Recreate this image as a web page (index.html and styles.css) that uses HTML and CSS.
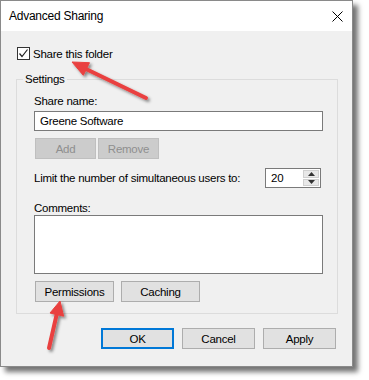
FILE: index.html
```html
<!DOCTYPE html>
<html lang="en">
<head>
    <meta charset="UTF-8">
    <title>Advanced Sharing</title>
    <link rel="stylesheet" href="styles.css">
</head>
<body>
    <div class="window">
        <div class="titlebar">
            <span class="title">Advanced Sharing</span>
            <svg class="close" width="11" height="11" viewBox="0 0 11 11">
                <path d="M0.5 0.5 L10.5 10.5 M10.5 0.5 L0.5 10.5" stroke="#000" stroke-width="1" fill="none"/>
            </svg>
        </div>

        <div class="content">
            <div class="check-row">
                <span class="checkbox">
                    <svg width="11" height="11" viewBox="0 0 11 11">
                        <path d="M1.5 5.5 L4 8.5 L9.5 1.5" stroke="#222" stroke-width="1.2" fill="none"/>
                    </svg>
                </span>
                <span>Share this folder</span>
            </div>

            <fieldset class="settings">
                <legend>Settings</legend>
                <div class="field-label">Share name:</div>
                <div class="textbox">Greene Software</div>
                <div class="btn-row">
                    <button class="btn btn-small" disabled>Add</button>
                    <button class="btn btn-small" disabled>Remove</button>
                </div>
                <div class="limit-row">
                    <span>Limit the number of simultaneous users to:</span>
                    <div class="spinner">
                        <span class="spin-value">20</span>
                        <span class="spin-btns">
                            <span class="spin-btn">
                                <svg width="7" height="4" viewBox="0 0 7 4"><path d="M0 4 L3.5 0 L7 4 Z" fill="#333"/></svg>
                            </span>
                            <span class="spin-btn">
                                <svg width="7" height="4" viewBox="0 0 7 4"><path d="M0 0 L3.5 4 L7 0 Z" fill="#333"/></svg>
                            </span>
                        </span>
                    </div>
                </div>
                <div class="field-label comments-label">Comments:</div>
                <div class="textarea"></div>
                <div class="btn-row btn-row-wide">
                    <button class="btn btn-wide">Permissions</button>
                    <button class="btn btn-wide">Caching</button>
                </div>
            </fieldset>

            <div class="dialog-buttons">
                <button class="btn btn-dialog btn-default">OK</button>
                <button class="btn btn-dialog">Cancel</button>
                <button class="btn btn-dialog">Apply</button>
            </div>
        </div>
    </div>

    <svg class="arrows" width="369" height="380" viewBox="0 0 369 380">
        <defs>
            <filter id="arrow-shadow" x="-20%" y="-20%" width="140%" height="140%">
                <feDropShadow dx="2" dy="2" stdDeviation="1.5" flood-color="#000" flood-opacity="0.45"/>
            </filter>
        </defs>
        <g filter="url(#arrow-shadow)" fill="#e9413f" stroke="#e9413f">
            <line x1="146" y1="98" x2="85" y2="68.5" stroke-width="4" stroke-linecap="round"/>
            <polygon points="72,62 89.5,62.7 83.3,75.3" stroke-width="1" stroke-linejoin="round"/>
            <line x1="49" y1="348" x2="57" y2="313" stroke-width="4" stroke-linecap="round"/>
            <polygon points="60,301 63.6,316.2 50,313" stroke-width="1" stroke-linejoin="round"/>
        </g>
    </svg>
</body>
</html>
```

FILE: styles.css
```css
body {
    margin: 0;
    width: 369px;
    height: 380px;
    overflow: hidden;
    position: relative;
    background-color: #ffffff;
    font-family: 'Liberation Sans', Arial, sans-serif;
    font-size: 11.5px;
    letter-spacing: -0.25px;
    color: #000000;
}

.window {
    width: 353px;
    height: 367px;
    box-sizing: border-box;
    border: 1px solid #8a8a8a;
    background-color: #f0f0f0;
    box-shadow: 5px 5px 5px rgba(0,0,0,0.55);
    display: flex;
    flex-direction: column;
}

.titlebar {
    height: 30px;
    background-color: #ffffff;
    display: flex;
    align-items: center;
    justify-content: space-between;
    padding: 0 9px 0 8px;
}

.title {
    font-size: 12px;
}

.close {
    display: block;
}

.content {
    flex: 1;
    padding: 16px 14px 0 15px;
}

.check-row {
    display: flex;
    align-items: center;
    gap: 3px;
    height: 13px;
    padding-left: 1px;
}

.checkbox {
    width: 13px;
    height: 13px;
    box-sizing: border-box;
    border: 1px solid #333333;
    background-color: #ffffff;
    display: flex;
    align-items: center;
    justify-content: center;
}

.checkbox svg {
    display: block;
}

.settings {
    margin: 12px 0 0 0;
    padding: 0 14px 11px 17px;
    border: 1px solid #dcdcdc;
    min-width: 0;
}

.settings legend {
    margin-left: -11px;
    padding: 0 2px;
    line-height: 14px;
}

.field-label {
    line-height: 14px;
    margin-top: 8px;
}

.textbox {
    margin-top: 3px;
    height: 20px;
    box-sizing: border-box;
    border: 1px solid #7a7a7a;
    background-color: #ffffff;
    padding-left: 5px;
    line-height: 18px;
}

.btn-row {
    display: flex;
    gap: 2px;
    margin-top: 7px;
    padding-left: 1px;
}

.btn-row-wide {
    gap: 7px;
}

.btn {
    height: 21px;
    box-sizing: border-box;
    background-color: #e1e1e1;
    border: 1px solid #adadad;
    font-family: inherit;
    font-size: 11.5px;
    letter-spacing: -0.25px;
    color: #000000;
    padding: 0;
    margin: 0;
}

.btn:disabled {
    background-color: #cccccc;
    border-color: #bfbfbf;
    color: #8f8f8f;
}

.btn-small {
    width: 61px;
}

.btn-wide {
    width: 79px;
}

.limit-row {
    display: flex;
    align-items: center;
    justify-content: space-between;
    margin-top: 9px;
    height: 20px;
}

.spinner {
    width: 56px;
    height: 20px;
    box-sizing: border-box;
    border: 1px solid #7a7a7a;
    background-color: #ffffff;
    margin-right: 2px;
    display: flex;
}

.spin-value {
    flex: 1;
    padding-left: 5px;
    line-height: 18px;
}

.spin-btns {
    width: 16px;
    display: flex;
    flex-direction: column;
    gap: 1px;
    padding: 1px 1px 1px 0;
}

.spin-btn {
    flex: 1;
    background-color: #e8e8e8;
    border: 1px solid #d0d0d0;
    display: flex;
    align-items: center;
    justify-content: center;
}

.spin-btn svg {
    display: block;
}

.comments-label {
    margin-top: 13px;
}

.textarea {
    height: 59px;
    box-sizing: border-box;
    border: 1px solid #7a7a7a;
    background-color: #ffffff;
}

.dialog-buttons {
    display: flex;
    justify-content: flex-end;
    gap: 8px;
    margin: 14px 2px 0 0;
}

.btn-dialog {
    width: 73px;
}

.btn-default {
    border-color: #0078d7;
    box-shadow: inset 0 0 0 1px #0078d7;
}

.arrows {
    position: absolute;
    top: 0;
    left: 0;
    pointer-events: none;
}
```
